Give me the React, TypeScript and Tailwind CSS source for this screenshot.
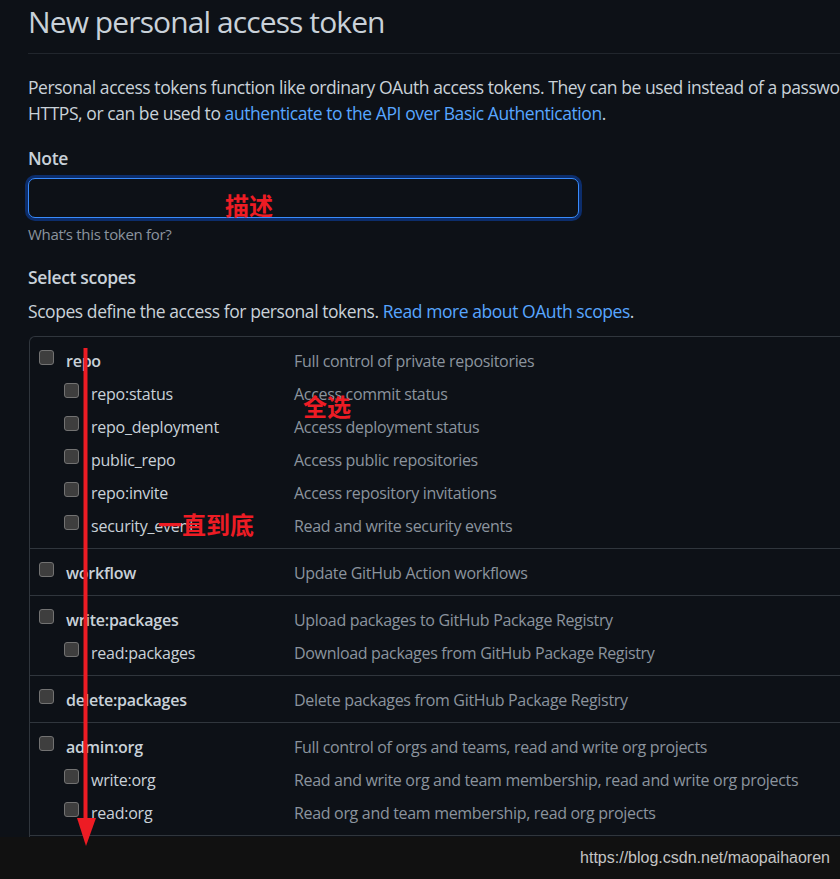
import React from "react";

type Row = { name: string; desc: string; sub?: boolean };

const groups: Row[][] = [
  [
    { name: "repo", desc: "Full control of private repositories" },
    { name: "repo:status", desc: "Access commit status", sub: true },
    { name: "repo_deployment", desc: "Access deployment status", sub: true },
    { name: "public_repo", desc: "Access public repositories", sub: true },
    { name: "repo:invite", desc: "Access repository invitations", sub: true },
    { name: "security_events", desc: "Read and write security events", sub: true },
  ],
  [{ name: "workflow", desc: "Update GitHub Action workflows" }],
  [
    { name: "write:packages", desc: "Upload packages to GitHub Package Registry" },
    { name: "read:packages", desc: "Download packages from GitHub Package Registry", sub: true },
  ],
  [{ name: "delete:packages", desc: "Delete packages from GitHub Package Registry" }],
  [
    { name: "admin:org", desc: "Full control of orgs and teams, read and write org projects" },
    { name: "write:org", desc: "Read and write org and team membership, read and write org projects", sub: true },
    { name: "read:org", desc: "Read org and team membership, read org projects", sub: true },
  ],
];

function Box() {
  return <span className="block w-[15px] h-[15px] rounded-[3px] bg-[#3e3e3e] border border-[#727272]" />;
}

function ScopeRow({ r }: { r: Row }) {
  return (
    <div className="flex items-center h-[33px]">
      <div className={r.sub ? "w-[264px] flex items-center pl-[34px]" : "w-[264px] flex items-center pl-[9px]"}>
        <span className="-mt-[6px]">
          <Box />
        </span>
        <span className={r.sub ? "ml-[12px] text-[#c9d1d9]" : "ml-[12px] font-semibold text-[#c9d1d9]"}>{r.name}</span>
      </div>
      <div className="text-[#8b949e] whitespace-nowrap tracking-[-0.02em]">{r.desc}</div>
    </div>
  );
}

export default function App() {
  return (
    <div
      className="relative w-[840px] h-[879px] overflow-hidden bg-[#0d1117] text-[#c9d1d9] text-[17.5px] leading-[26px]"
      style={{ fontFamily: '"Open Sans", "Noto Sans", sans-serif' }}
    >
      <div className="w-[1000px] pl-[28px]">
        <div className="h-[54px] border-b border-[#21262d] flex items-start">
          <h1 className="text-[30px] leading-[44px] font-normal text-[#c9d1d9] tracking-[-0.03em]">New personal access token</h1>
        </div>
        <p className="mt-[20px] whitespace-nowrap tracking-[-0.025em]">
          Personal access tokens function like ordinary OAuth access tokens. They can be used instead of a password for Git over
          <br />
          HTTPS, or can be used to <span className="text-[#58a6ff]">authenticate to the API over Basic Authentication</span>.
        </p>
        <div className="mt-[19px] font-semibold tracking-[-0.02em]">Note</div>
        <div className="mt-[7px] w-[551px] h-[40px] rounded-[7px] border border-[#388bfd] bg-[#0d1117] shadow-[0_0_0_3px_#0c2d6b]" />
        <div className="mt-[5px] text-[15px] leading-[22px] text-[#8b949e] tracking-[-0.02em]">What’s this token for?</div>
        <div className="mt-[19px] font-semibold tracking-[-0.02em]">Select scopes</div>
        <p className="mt-[8px] tracking-[-0.025em]">
          Scopes define the access for personal tokens. <span className="text-[#58a6ff]">Read more about OAuth scopes</span>.
        </p>
        <div className="mt-[12px] ml-[1px] border-l border-t border-[#30363d] rounded-tl-[6px] text-[16px] tracking-[-0.015em]">
          {groups.map((g, i) => (
            <div key={i} className={i === 0 ? "pt-[7px] pb-[6px]" : "pt-[7px] pb-[6px] border-t border-[#30363d]"}>
              {g.map((r) => (
                <ScopeRow key={r.name} r={r} />
              ))}
            </div>
          ))}
          <div className="border-t border-[#30363d] h-[3px]" />
        </div>
      </div>

      <div className="absolute left-0 right-0 bottom-0 h-[42px] bg-[#111111] flex items-center justify-end pr-[10px]">
        <span className="text-[16px] text-[#c4c4c4]" style={{ fontFamily: '"Liberation Sans", Arial, sans-serif' }}>
          https://blog.csdn.net/maopaihaoren
        </span>
      </div>

      {/* red annotations */}
      <div
        className="absolute left-[225px] top-[190px] text-[24px] leading-[30px] font-bold text-[#ed1c24]"
        style={{ fontFamily: '"Noto Sans CJK SC", sans-serif' }}
      >
        描述
      </div>
      <div
        className="absolute left-[303px] top-[391px] text-[24px] leading-[30px] font-bold text-[#ed1c24]"
        style={{ fontFamily: '"Noto Sans CJK SC", sans-serif' }}
      >
        全选
      </div>
      <div
        className="absolute left-[158px] top-[509px] text-[24px] leading-[30px] font-bold text-[#ed1c24]"
        style={{ fontFamily: '"Noto Sans CJK SC", sans-serif' }}
      >
        一直到底
      </div>
      <svg className="absolute left-0 top-0" width="840" height="879">
        <rect x="83.5" y="348" width="4" height="476" fill="#ed1c24" />
        <polygon points="77,818 96,818 86,846" fill="#ed1c24" />
      </svg>
    </div>
  );
}
